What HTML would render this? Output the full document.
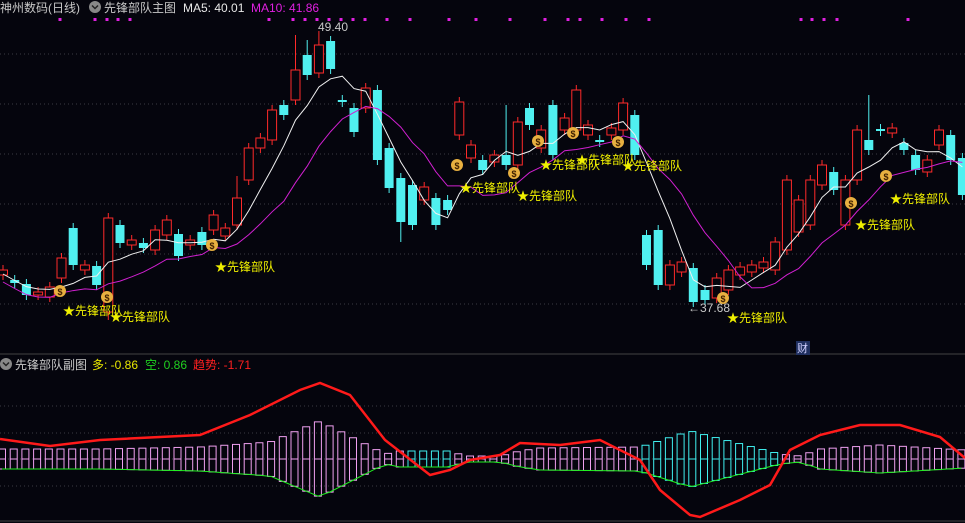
<!DOCTYPE html><html><head><meta charset="utf-8"><style>
body{margin:0;background:#05050d;width:965px;height:523px;overflow:hidden;font-family:"Liberation Sans","Noto Sans CJK SC",sans-serif}
svg{position:absolute;left:0;top:0}
</style></head><body>
<svg id="s" width="965" height="523" xmlns="http://www.w3.org/2000/svg">
<rect width="965" height="523" fill="#05050d"/>
<g stroke="#3a3a44" stroke-dasharray="1,3">
<line x1="0" y1="54" x2="965" y2="54"/><line x1="0" y1="104" x2="965" y2="104"/><line x1="0" y1="154" x2="965" y2="154"/><line x1="0" y1="204" x2="965" y2="204"/><line x1="0" y1="254" x2="965" y2="254"/><line x1="0" y1="304" x2="965" y2="304"/>
<line x1="0" y1="406" x2="965" y2="406"/><line x1="0" y1="433" x2="965" y2="433"/><line x1="0" y1="459" x2="965" y2="459"/><line x1="0" y1="486" x2="965" y2="486"/>
</g>
<line x1="0" y1="354" x2="965" y2="354" stroke="#444" />
<line x1="0" y1="521" x2="965" y2="521" stroke="#444" />
<text x="0" y="12" font-size="12" fill="#c8c8c8">神州数码(日线)</text>
<circle cx="95" cy="7" r="6" fill="#888"/><path d="M92 5.5l3 3 3-3" stroke="#222" stroke-width="1.5" fill="none"/>
<text x="104" y="12" font-size="12" fill="#c8c8c8">先锋部队主图</text>
<text x="183" y="12" font-size="12" fill="#e8e8e8">MA5: 40.01</text>
<text x="251" y="12" font-size="12" fill="#e020e0">MA10: 41.86</text>
<circle cx="6" cy="364" r="6" fill="#888"/><path d="M3 362.5l3 3 3-3" stroke="#222" stroke-width="1.5" fill="none"/>
<text x="15" y="369" font-size="12" fill="#c8c8c8">先锋部队副图</text>
<text x="92" y="369" font-size="12" fill="#e8e800">多: -0.86</text>
<text x="145" y="369" font-size="12" fill="#20d020">空: 0.86</text>
<text x="193" y="369" font-size="12" fill="#ff2020">趋势: -1.71</text>
<g id="g"></g>
</svg>
<script>
var g=document.getElementById('g'),h='';
var C=[['r',270,275],['c',280,283],['c',284,295],['r',292,295],['r',287,297],['r',258,278],['c',228,265],['r',265,270],['c',266,285],['r',218,312],['c',225,243],['r',240,245],['c',243,248],['r',230,250],['r',220,235],['c',234,256],['r',240,245],['c',232,245],['r',215,230],['r',228,236],['r',198,225],['r',148,180],['r',138,148],['r',110,140],['c',105,115],['r',70,100],['c',55,75],['r',45,73],['c',41,69],['c',100,102],['c',108,132],['r',88,108],['c',90,160],['c',148,188],['c',178,222],['c',185,225],['r',187,200],['c',198,225],['c',200,210],['r',102,135],['r',145,158],['c',160,170],['r',155,162],['c',155,165],['r',122,165],['c',108,125],['r',130,148],['c',105,155],['r',118,130],['r',90,130],['r',125,135],['c',140,142],['r',128,135],['r',103,130],['c',115,155],['c',235,265],['c',230,285],['r',265,285],['r',262,272],['c',268,302],['c',290,300],['r',278,298],['r',270,290],['r',267,275],['r',265,272],['r',262,268],['r',242,270],['r',180,250],['r',200,232],['r',180,225],['r',165,185],['c',172,190],['r',180,225],['r',130,180],['c',140,150],['c',129,131],['r',128,133],['c',143,150],['c',155,170],['r',160,172],['r',130,145],['c',135,160],['c',158,195]];
var sp=11.7,cl=[];
C.forEach(function(c,i){var x=3+i*sp,col=c[0]=='r'?'#ff2a2a':'#50f0f0';var t=c[1],b=c[2];
var wt=t-(i==25?35:i==26?15:i==27?14:i==43?50:i==74?45:i==20?22:5),wb=b+(i==34?20:i==9?8:5);
h+='<line x1="'+x+'" y1="'+wt+'" x2="'+x+'" y2="'+wb+'" stroke="'+col+'"/>';
if(c[0]=='r')h+='<rect x="'+(x-4.5)+'" y="'+t+'" width="9" height="'+(b-t)+'" fill="#05050d" stroke="'+col+'"/>';
else h+='<rect x="'+(x-4.5)+'" y="'+t+'" width="9" height="'+Math.max(b-t,1)+'" fill="'+col+'"/>';
cl.push(c[0]=='r'?t:b);});
function ma(n,col){var p='';for(var i=0;i<cl.length;i++){var s=0,k=0;for(var j=Math.max(0,i-n+1);j<=i;j++){s+=cl[j];k++;}p+=(i?'L':'M')+(3+i*sp)+' '+(s/k+(n==10?12:4));}h+='<path d="'+p+'" stroke="'+col+'" fill="none"/>';}
ma(5,'#f0f0f0');ma(10,'#d020d0');
[60,95,107,118,130,269,293,305,317,329,341,353,365,387,410,449,476,510,545,568,580,602,626,649,801,812,824,837,908].forEach(function(x){h+='<rect x="'+(x-1.5)+'" y="18" width="3" height="3" fill="#e020e0"/>';});
[[60,291],[107,297],[212,245],[457,165],[514,173],[538,141],[573,133],[618,142],[723,298],[851,203],[886,176]].forEach(function(p){h+='<circle cx="'+p[0]+'" cy="'+p[1]+'" r="6" fill="#e8b040"/><text x="'+p[0]+'" y="'+(p[1]+4)+'" font-size="9" text-anchor="middle" fill="#402000" font-weight="bold">$</text>';});
[[63,311],[110,317],[215,267],[460,188],[517,196],[540,165],[576,160],[622,166],[727,318],[855,225],[890,199]].forEach(function(p){h+='<text x="'+p[0]+'" y="'+(p[1]+4)+'" font-size="12" fill="#f0f000">★先锋部队</text>';});
h+='<text x="318" y="31" font-size="12" fill="#c8c8c8">49.40</text><text x="688" y="312" font-size="12" fill="#c8c8c8">←37.68</text>';
h+='<rect x="796" y="341" width="14" height="14" fill="#203060"/><text x="797" y="352" font-size="11" fill="#d0d0ff">财</text>';
var A=[[0,10],[100,10],[200,12],[270,17],[320,38],[385,5],[400,8],[450,8],[465,3],[500,3],[520,8],[540,11],[640,12],[690,28],[780,5],[800,3],[820,10],[880,14],[965,9]];
function amp(x){for(var i=1;i<A.length;i++)if(x<=A[i][0]){var a=A[i-1],b=A[i];return a[1]+(b[1]-a[1])*(x-a[0])/(b[0]-a[0]);}return 9;}
var top='',bot='';
for(var i=0;i<83;i++){var x=2+i*sp,a=amp(x),cy=459;var cyan=(x>405&&x<452)||(x>640&&x<785);var col=cyan?'#40f0f0':'#f0a0f0';
h+='<rect x="'+(x-3.5)+'" y="'+(cy-a)+'" width="7" height="'+(2*a)+'" fill="none" stroke="'+col+'"/><line x1="'+(x-3.5)+'" y1="'+cy+'" x2="'+(x+3.5)+'" y2="'+cy+'" stroke="'+col+'"/>';
top+=(i?'L':'M')+x+' '+(cy-a);bot+=(i?'L':'M')+x+' '+(cy+a);}
h+='<path d="'+top+'" stroke="#f0f000" fill="none"/><path d="'+bot+'" stroke="#20f020" fill="none"/>';
var R=[[0,439],[50,446],[100,440],[200,435],[250,415],[300,390],[320,383],[350,395],[385,440],[430,475],[450,470],[470,460],[500,455],[520,443],[560,445],[600,440],[640,460],[660,490],[690,515],[700,517],[740,500],[770,485],[790,450],[820,435],[860,425],[900,425],[940,437],[965,458]];
h+='<path d="M'+R.map(function(p){return p.join(' ')}).join('L')+'" stroke="#ff1a1a" stroke-width="2.5" fill="none"/>';
g.innerHTML=h;
</script>
</body></html>
